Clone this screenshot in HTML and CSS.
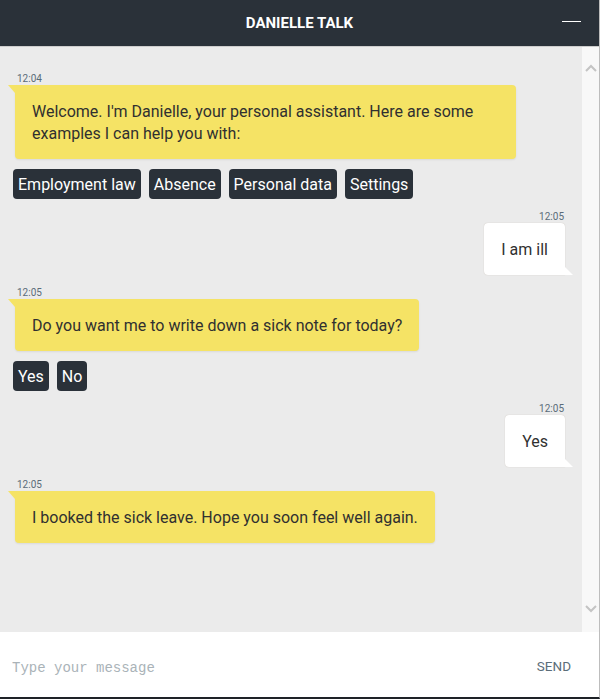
FILE: index.html
```html
<!DOCTYPE html>
<html lang="en">

<head>
  <meta charset="UTF-8">
  <meta name="viewport" content="width=device-width, initial-scale=1.0">
  <title>Danielle Talk</title>
  <link rel="stylesheet" href="styles.css">
</head>

<body>
  <div class="chat">
    <div class="header">
      <h1>DANIELLE TALK</h1>
      <span class="minimize"></span>
    </div>

    <div class="body">
      <div class="messages">
        <div class="group bot">
          <div class="time">12:04</div>
          <div class="bubble">Welcome. I'm Danielle, your personal assistant. Here are some examples I can help you with:</div>
          <div class="options">
            <button class="option">Employment law</button>
            <button class="option">Absence</button>
            <button class="option">Personal data</button>
            <button class="option">Settings</button>
          </div>
        </div>

        <div class="group user">
          <div class="time">12:05</div>
          <div class="bubble">I am ill</div>
        </div>

        <div class="group bot">
          <div class="time">12:05</div>
          <div class="bubble">Do you want me to write down a sick note for today?</div>
          <div class="options">
            <button class="option">Yes</button>
            <button class="option">No</button>
          </div>
        </div>

        <div class="group user">
          <div class="time">12:05</div>
          <div class="bubble">Yes</div>
        </div>

        <div class="group bot">
          <div class="time">12:05</div>
          <div class="bubble">I booked the sick leave. Hope you soon feel well again.</div>
        </div>
      </div>

      <div class="scrollbar">
        <svg width="12" height="8" viewBox="0 0 12 8">
          <polyline points="1,7 6,2 11,7" fill="none" stroke="#c4c4c4" stroke-width="2" />
        </svg>
        <svg width="12" height="8" viewBox="0 0 12 8">
          <polyline points="1,1 6,6 11,1" fill="none" stroke="#c4c4c4" stroke-width="2" />
        </svg>
      </div>
    </div>

    <div class="composer">
      <input class="input" type="text" placeholder="Type your message">
      <button class="send">SEND</button>
    </div>
  </div>
</body>

</html>
```

FILE: styles.css
```css
body {
  margin: 0;
  font-family: Roboto, "Liberation Sans", sans-serif;
  background: #fff;
}

.chat {
  width: 599px;
  height: 697px;
  border-right: 1px solid #bdbdbd;
  border-bottom: 2px solid #1e2227;
  display: flex;
  flex-direction: column;
}

.header {
  height: 46px;
  background-color: #2a3139;
  border-bottom: 1px solid #cdcdcd;
  display: flex;
  align-items: center;
  justify-content: center;
  position: relative;
}

.header h1 {
  margin: 0;
  color: #fff;
  font-size: 15px;
  font-weight: bold;
}

.minimize {
  position: absolute;
  right: 18px;
  top: 21px;
  width: 19px;
  height: 1px;
  background: #fff;
}

.body {
  flex: 1;
  display: flex;
  background-color: #ebebeb;
}

.messages {
  flex: 1;
  padding: 14px 17px 0 15px;
}

.scrollbar {
  width: 17px;
  background-color: #f8f8f8;
  display: flex;
  flex-direction: column;
  justify-content: space-between;
  align-items: center;
  padding: 17px 0 19px;
}

.group {
  margin-top: 12px;
  display: flex;
  flex-direction: column;
}

.time {
  font-size: 10px;
  line-height: 12px;
  color: #5a6b79;
}

.bubble {
  position: relative;
  font-size: 16px;
  line-height: 22px;
  color: #303030;
  padding: 16px 17px 14px;
  border-radius: 4px;
}

.bot .time {
  margin-left: 2px;
}

.bot .bubble {
  align-self: flex-start;
  max-width: 467px;
  background-color: #f5e365;
  border-top-left-radius: 0;
  box-shadow: 0 1px 2px rgba(0, 0, 0, 0.08);
}

.bot .bubble::before {
  content: "";
  position: absolute;
  left: -7px;
  top: 0;
  border-top: 8px solid #f5e365;
  border-left: 7px solid transparent;
}

.user {
  align-items: flex-end;
}

.user .time {
  margin-right: 1px;
}

.user .bubble {
  background-color: #fff;
  border-bottom-right-radius: 0;
  box-shadow: 0 0 1px rgba(120, 100, 70, 0.35);
}

.user .bubble::after {
  content: "";
  position: absolute;
  left: 100%;
  bottom: 0;
  border-bottom: 8px solid #fff;
  border-right: 8px solid transparent;
}

.options {
  display: flex;
  gap: 8px;
  margin: 10px 0 0 -2px;
}

.option {
  height: 30px;
  padding: 0 5px;
  border: none;
  border-radius: 4px;
  background-color: #2a3139;
  color: #fff;
  font-family: Roboto, "Liberation Sans", sans-serif;
  font-size: 16px;
}

.composer {
  height: 65px;
  background: #fff;
  display: flex;
  align-items: center;
  padding: 0 28px 0 12px;
}

.input {
  flex: 1;
  border: none;
  outline: none;
  padding: 0;
  margin-top: 6px;
  font-family: "Liberation Mono", monospace;
  font-size: 14px;
  color: #333;
}

.input::placeholder {
  color: #aab3b8;
}

.send {
  border: none;
  background: none;
  padding: 0;
  margin-top: 2px;
  font-family: Roboto, "Liberation Sans", sans-serif;
  font-size: 13.5px;
  color: #5b6d79;
}
```
